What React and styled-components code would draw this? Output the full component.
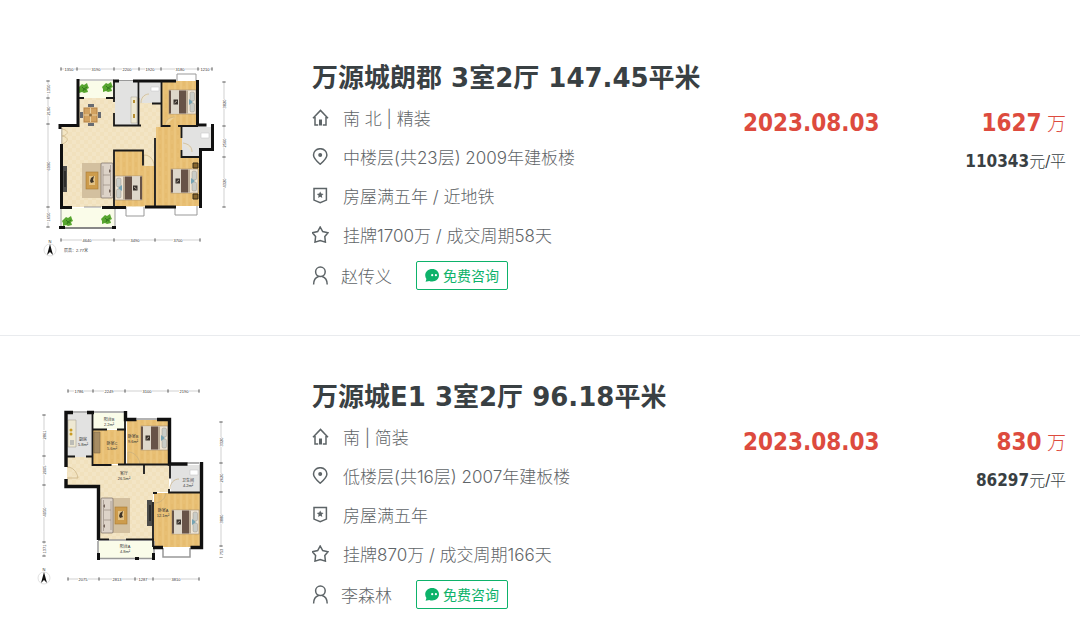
import React from 'react';
import styled, { createGlobalStyle } from 'styled-components';

const listings = [
  {
    id: 1,
    title: '万源城朗郡 3室2厅 147.45平米',
    house: '南 北 | 精装',
    position: '中楼层(共23层) 2009年建板楼',
    tags: '房屋满五年 / 近地铁',
    cycle: '挂牌1700万 / 成交周期58天',
    agent: '赵传义',
    date: '2023.08.03',
    total: '1627',
    unit: '110343',
    plan: PlanOne,
  },
  {
    id: 2,
    title: '万源城E1 3室2厅 96.18平米',
    house: '南 | 简装',
    position: '低楼层(共16层) 2007年建板楼',
    tags: '房屋满五年',
    cycle: '挂牌870万 / 成交周期166天',
    agent: '李森林',
    date: '2023.08.03',
    total: '830',
    unit: '86297',
    plan: PlanTwo,
  },
];

function App() {
  return (
    <>
      <GlobalStyle />
      <List>
        {listings.map((item) => (
          <Listing key={item.id} item={item} />
        ))}
      </List>
    </>
  );
}

export default App;

function Listing({ item }) {
  const Plan = item.plan;
  return (
    <Row>
      <PlanLink href="#" aria-label={item.title}>
        <Plan />
      </PlanLink>
      <Info>
        <Title><a href="#">{item.title}</a></Title>
        <Line><HouseIcon />{item.house}</Line>
        <Line><PinIcon />{item.position}</Line>
        <Line><BadgeIcon />{item.tags}</Line>
        <Line><StarIcon />{item.cycle}</Line>
        <AgentLine>
          <PersonIcon />
          <AgentName href="#">{item.agent}</AgentName>
          <ChatButton type="button"><ChatIcon />免费咨询</ChatButton>
        </AgentLine>
      </Info>
      <DealDate>{item.date}</DealDate>
      <Prices>
        <Total><b>{item.total}</b> 万</Total>
        <Unit><b>{item.unit}</b>元/平</Unit>
      </Prices>
    </Row>
  );
}

/* line icons */

function HouseIcon() {
  return (
    <Icon viewBox="0 0 17 17">
      <path d="M1 9.2 8.5 1.4 16 9.2M3 8v7.9h3.2M14 8v7.9h-3.2" />
      <path d="M8.5 10.5v6" strokeWidth="3" />
    </Icon>
  );
}

function PinIcon() {
  return (
    <Icon viewBox="0 0 17 17">
      <path d="M8.2 16.2C5 13.4 1.5 10.3 1.5 6.9a6.7 6.2 0 0 1 13.4 0c0 3.4-3.5 6.5-6.7 9.3z" />
      <circle cx="8.2" cy="7" r="2" fill="#5d6467" stroke="none" />
    </Icon>
  );
}

function BadgeIcon() {
  return (
    <Icon viewBox="0 0 17 17">
      <path d="M2 1.5h12.4v11.6l-6.2 2.6L2 13.1z" />
      <path d="m8.2 4.4 1 2.2 2.4.3-1.8 1.6.5 2.4-2.1-1.2-2.1 1.2.5-2.4-1.8-1.6 2.4-.3z" fill="#5d6467" stroke="none" />
    </Icon>
  );
}

function StarIcon() {
  return (
    <Icon viewBox="0 0 17 17">
      <path d="m8.2 1 2.5 4.6 5.3 1.2-3.2 3.8.6 5.5-5.2-1.6-5.2 1.6.6-5.5L.4 6.8l5.3-1.2z" />
    </Icon>
  );
}

function PersonIcon() {
  return (
    <Icon viewBox="0 0 17 19" $tall>
      <circle cx="8.4" cy="5.8" r="4.8" />
      <path d="M1.6 18.6c0-4.5 2.3-7.3 5-8.1M15.2 18.6c0-4.5-2.3-7.3-5-8.1" />
    </Icon>
  );
}

function ChatIcon() {
  return (
    <Bubble viewBox="0 0 14 13">
      <path d="M7.2 0C11 0 14 2.7 14 6.3s-3 6.2-6.8 6.2c-1.1 0-2-.2-2.9-.6L.6 12.7l.8-2.8A6 6 0 0 1 .2 6.3C.2 2.7 3.4 0 7.2 0z" fill="#0db26a" />
      <circle cx="7.2" cy="6.2" r="1.1" fill="#fff" />
      <circle cx="10.9" cy="6.2" r="1.1" fill="#fff" />
    </Bubble>
  );
}

/* floor plan pieces */

function PlanPatterns({ id }) {
  return (
    <defs>
      <pattern id={`wood-${id}`} width="12" height="9" patternUnits="userSpaceOnUse">
        <rect width="12" height="9" fill="#e8bf74" />
        <path d="M1 0v9M7 0v9" stroke="#ebc57d" strokeWidth="2" />
        <path d="M4 0v5M10 4v5" stroke="#e4b96a" />
      </pattern>
      <pattern id={`tile-${id}`} width="8" height="8" patternUnits="userSpaceOnUse">
        <rect width="8" height="8" fill="#f3e5c5" />
        <path d="M0 0h4v4H0zM4 4h4v4H4z" fill="#f1e1bd" />
      </pattern>
    </defs>
  );
}

function Bed({ x, y, flip }) {
  return (
    <g transform={flip ? `translate(${x + 27} ${y}) scale(-1 1)` : `translate(${x} ${y})`}>
      <rect width="27" height="24" fill="#efe6d6" stroke="#a08d72" strokeWidth="0.6" />
      <path d="M0 .5h2v23H0zM10 .5h7v23h-7z" fill="#675348" />
      <path d="M2 .5h8v23H2z" fill="#ded7ca" />
      <path d="M17 .5h2v23h-2z" fill="#b9aa95" />
      <rect x="4.5" y="9.5" width="4.5" height="5" fill="#39322d" />
      <path d="m5.5 13 2.4-2" stroke="#d8d1c4" strokeWidth="0.8" />
      <rect x="21" y="2" width="4.5" height="9" rx="1.5" fill="#c9ccc7" stroke="#8f8778" strokeWidth="0.4" />
      <rect x="21" y="13" width="4.5" height="9" rx="1.5" fill="#c9ccc7" stroke="#8f8778" strokeWidth="0.4" />
      <path d="m20 9 4 3-4 3z" fill="#75a3b4" />
    </g>
  );
}

function Bush({ x, y }) {
  return (
    <g transform={`translate(${x} ${y})`}>
      <path d="m-4-2 2-2 2 1 3-2 1 3 1 2-2 1 1 3-4 1-2-1-3 1v-3l-1-2z" fill="#57a52f" />
      <path d="M-2-1 0 1l3-2M-1 3l1-2 2 1" fill="none" stroke="#327a1c" />
    </g>
  );
}

function Sofa({ x, y, flip }) {
  return (
    <g transform={flip ? `translate(${x + 12} ${y}) scale(-1 1)` : `translate(${x} ${y})`}>
      <rect width="12" height="35" rx="1" fill="#ddd3c8" stroke="#756a61" strokeWidth="0.7" />
      <path d="M2 3v29M2 12h7M2 22h7M9.5 2v31" fill="none" stroke="#8d8177" strokeWidth="0.6" />
      <path d="m8 6 2 2-2 2zM8 26l2 2-2 2z" fill="#736259" />
    </g>
  );
}

function CoffeeTable({ x, y }) {
  return (
    <g>
      <rect x={x - 4} y={y - 9} width="19" height="35" fill="#d3c09f" />
      <rect x={x} y={y} width="12" height="17" fill="#cd9c4c" stroke="#a97a32" strokeWidth="0.6" />
      <rect x={x + 3} y={y + 4} width="6" height="9" fill="#e3c387" />
      <path d={`M${x + 5} ${y + 6}l3-2-1 4 1 2-3 1-1-2z`} fill="#3e3428" />
    </g>
  );
}

function Screen({ x, y }) {
  return (
    <g>
      <rect x={x} y={y} width="5" height="26" fill="#4c4c4a" />
      <path d={`M${x + 3} ${y + 5}v16`} stroke="#222" strokeWidth="1.5" />
    </g>
  );
}

// a chain of measurements with arrow ticks, drawn along x or y
function Dimension({ at, ticks, labels, vertical }) {
  const first = ticks[0];
  const last = ticks[ticks.length - 1];
  return (
    <g>
      <path
        d={vertical ? `M${at} ${first}V${last}` : `M${first} ${at}H${last}`}
        stroke="#b3b3b3"
        strokeWidth="0.6"
      />
      {ticks.map((t) => (
        <path
          key={t}
          d={vertical ? `M${at - 2} ${t}h4M${at} ${t - 1}v2` : `M${t} ${at - 2}v4M${t - 1} ${at}h2`}
          stroke="#777"
          strokeWidth="0.8"
        />
      ))}
      {labels.map(([pos, text]) => {
        const x = vertical ? at : pos;
        const y = vertical ? pos : at;
        return (
          <g key={pos} transform={vertical ? `rotate(-90 ${x} ${y})` : undefined}>
            <rect x={x - 5} y={y - 2} width="10" height="4" fill="#fff" />
            <PlanText x={x} y={y + 1.5}>{text}</PlanText>
          </g>
        );
      })}
    </g>
  );
}

function Compass({ x, y }) {
  return (
    <g>
      <circle cx={x} cy={y} r="6" fill="none" stroke="#ccc" strokeWidth="0.6" />
      <path d={`M${x} ${y - 6}l3 11-3-3-3 3z`} fill="#111" />
      <PlanText x={x} y={y - 7}>N</PlanText>
    </g>
  );
}

function RoomLabel({ x, y, name, area }) {
  return (
    <>
      <PlanText x={x} y={y}>{name}</PlanText>
      <PlanText x={x} y={y + 5}>{area}</PlanText>
    </>
  );
}

function PlanOne() {
  return (
    <PlanSvg viewBox="30 55 210 212">
      <PlanPatterns id="one" />
      <path d="M79 98h75v109H61v-83h18z" fill="url(#tile-one)" />
      <path d="M139 103h22v35h-22z" fill="url(#tile-one)" />
      <path d="M78 81h36v17H78zM61 208h54v19H61z" fill="#fafce9" />
      <path d="M115 81h24v44h-24zM140 81h21v22h-21zM182 127h29v22h-11v8h-18z" fill="#e2e2e1" />
      <path d="M162 81h35v46h-35zM156 127h26v30h17v49h-43zM115 151h28v15h12v40h-40z" fill="url(#wood-one)" />

      <Bed x={169} y={90} />
      <Bed x={171} y={169} />
      <Bed x={115} y={176} flip />
      <path d="M193 163h5v5h-5zM193 194h5v5h-5z" fill="#87662d" stroke="#372b16" />
      <CoffeeTable x={86} y={172} />
      <Sofa x={101} y={163} />
      <Screen x={62} y={166} />

      <path d="M88 104h6v3h-6zM88 123h6v3h-6zM80 112h3v6h-3zM98 112h3v6h-3z" fill="#676b72" />
      <rect x="84" y="108" width="13" height="14" fill="#d2a260" stroke="#b58244" />
      <path d="M84 115h13M90.500 108v14" stroke="#ead0a0" />
      <circle cx="90.500" cy="115" r="1.5" fill="#8b6a3c" />

      <path d="M131 97h6v26h-6z" fill="#eee8d2" stroke="#b4ad9b" strokeWidth="0.6" />
      <path d="M133 100h2v3h-2zM133 114h2v4h-2z" fill="#b88f32" />
      <path d="M151 87h8v4h-8zM201 133h8v5h-8z" fill="#fff" stroke="#c9c9c9" strokeWidth="0.6" />
      <Bush x={84} y={88} />
      <Bush x={108} y={87} />
      <Bush x={68} y={221} />
      <Bush x={107} y={219} />

      <path d="M62 128v16M177 81v-7h19v7M119 80.500h14M126 207v9h18v-9M175 206v9h22v-9M78 80h36M61 208v19M115 208v19M84 207h17" fill="none" stroke="#999" />
      <path d="M62 129c7 1 7 6 0 7 7 1 7 6 0 8M141 103c0-7 5-9 8-9M165 126c0-6 5-9 10-9M183 143c6 1 9 4 9 9M144 166v-11c6 0 10 5 10 11" fill="#f6e8c4" fillOpacity="0.4" stroke="#c6ad7c" strokeWidth="0.6" />

      <path d="M78 79v46.500H60V129M61.500 144v64" fill="none" stroke="#101010" strokeWidth="3" />
      <path d="M113 81h6M133 81h43M197.500 80v45h9M212.500 124v25.500h-12V208M145 207h11M156 207h20M60 207.500h12M102 207.500h24" fill="none" stroke="#101010" strokeWidth="3" />
      <path d="M114 80v22M114 113v12.500h27M138.500 80v45.500M152 103.500h9M161.500 81v45h9M155 138v68M114 208v-57.500h29v15M181.500 126v12M181.500 150v7h18M178 126h20M79 98h5M106 98h9" fill="none" stroke="#181818" strokeWidth="1.8" />
      <path d="M59 226h6v3h-6zM112 226h4v3h-4zM65 227.500h47v1H65z" fill="#101010" />

      <Dimension at={69} ticks={[61, 77, 114, 139, 161, 198, 212]} labels={[[69, '1350'], [96, '3190'], [127, '2200'], [150, '1920'], [180, '3180'], [205, '1210']]} />
      <Dimension at={240} ticks={[61, 114, 155, 200]} labels={[[87, '4640'], [135, '3490'], [178, '3700']]} />
      <Dimension vertical at={48} ticks={[81, 98, 124, 207, 227]} labels={[[89, '1350'], [111, '2190'], [166, '6990'], [217, '1650']]} />
      <Dimension vertical at={224} ticks={[82, 126, 157, 207]} labels={[[104, '3820'], [143, '2560'], [183, '4320']]} />
      <Compass x={50} y={250} />
      <PlanText x={76} y={252}>层高：2.77米</PlanText>
    </PlanSvg>
  );
}

function PlanTwo() {
  return (
    <PlanSvg viewBox="30 374 210 212">
      <PlanPatterns id="two" />
      <path d="M67 457h26v8h76v27h-16v48h-54v-54H67z" fill="url(#tile-two)" />
      <path d="M67 413h26v44H67zM171 465h30v28h-30z" fill="#e2e2e1" />
      <path d="M93 413h32v16H93zM99 541h54v17H99z" fill="#fafce9" />
      <path d="M93 430h32v34H93zM127 420h42v44h-42zM154 493h46v54h-46z" fill="url(#wood-two)" />

      <Bed x={141} y={426} />
      <Bed x={172} y={510} />
      <CoffeeTable x={115} y={507} />
      <Sofa x={101} y={498} flip />
      <Screen x={147} y={500} />
      <path d="M94 432h6v21h-6z" fill="#a68c63" stroke="#806a48" strokeWidth="0.6" />
      <path d="M68 420h8v27h-8z" fill="#eee8d2" stroke="#a9a394" strokeWidth="0.6" />
      <circle cx="71" cy="430" r="1.500" fill="#c99c25" />
      <circle cx="71" cy="434" r="1.500" fill="#c99c25" />
      <path d="M70 440h4v5h-4z" fill="#bcbcb6" />
      <path d="M190 470h8v5h-8z" fill="#fff" stroke="#c6c6c6" strokeWidth="0.6" />

      <path d="M73 412h14M94 412h30M137 419h20M187 463h12M98 541v14M154 541v14M163 548v9h27v-9M109 540h17M99 558.500h55" fill="none" stroke="#999" strokeWidth="1.5" />
      <path d="M67 467c6 0 10 5 11 11H67M128 464v-12c6 0 11 5 12 12M154 503c7 0 11-4 12-10M170 489c0-6 4-10 9-10" fill="none" stroke="#c6ad7c" strokeWidth="0.7" />

      <path d="M73 412.500h-7V467M66 479v7.500h32.500V540M87 412.500h7M125.500 411v8.500h11M157 419.500h12.500v44.500h18M201.500 462v85.500h-11M163 547.500h-10" fill="none" stroke="#101010" strokeWidth="3.4" />
      <path d="M92.500 413v52h19M118 464.500h25M67 456.500h8M86 456.500h7M92 429.500h15M117 429.500h9M125 420v44M143 464.500h27v14M144 464v10M169 489v3.500h32M153 502v45M153 493h4M98 539.500h11M126 539.500h28" fill="none" stroke="#181818" strokeWidth="1.8" />
      <path d="M97 553h3v7h-3zM152 553h3v7h-3zM135 557h4v3h-4z" fill="#101010" />

      <RoomLabel x={83} y={441} name="厨房" area="5.8m²" />
      <RoomLabel x={109} y={421} name="阳台B" area="2.2m²" />
      <RoomLabel x={112} y={445} name="卧室C" area="5.6m²" />
      <RoomLabel x={133} y={438} name="卧室B" area="9.6m²" />
      <RoomLabel x={124} y={475} name="客厅" area="26.5m²" />
      <RoomLabel x={188} y={482} name="卫生间" area="4.2m²" />
      <RoomLabel x={163} y={512} name="卧室A" area="12.1m²" />
      <RoomLabel x={125} y={548} name="阳台A" area="4.8m²" />

      <Dimension at={391} ticks={[68, 93, 125, 168, 199]} labels={[[79, '1786'], [109, '2249'], [147, '3100'], [184, '2190']]} />
      <Dimension at={579} ticks={[68, 99, 135, 153, 199]} labels={[[83, '2075'], [117, '2813'], [143, '1287'], [176, '3810']]} />
      <Dimension vertical at={44} ticks={[415, 456, 485, 542, 556]} labels={[[435, '2861'], [470, '2005'], [512, '4050'], [549, '1371']]} />
      <Dimension vertical at={221} ticks={[422, 463, 492, 546, 557]} labels={[[442, '3320'], [478, '2620'], [519, '3880'], [552, '753']]} />
      <Compass x={44} y={578} />
    </PlanSvg>
  );
}

const GlobalStyle = createGlobalStyle`
  *{
    box-sizing:border-box;
  }
  body{
    margin:0;
    background:#fff;
    color:#5f6568;
    font-family:Inter, "Noto Sans CJK SC", sans-serif;
    font-size:17px;
    font-weight:300;
  }
  a{
    color:inherit;
    text-decoration:none;
  }
`;

const List = styled.ul`
  list-style:none;
  margin:0;
  padding:17px 0 0;
`;

const Row = styled.li`
  display:grid;
  grid-template-columns:282px 1fr 160px 163px;
  align-items:start;
  padding:38px 14px 39px 30px;
  border-bottom:1px solid #e9ebee;
  &:last-child{
    padding-bottom:0;
    border-bottom:0;
  }
`;

const PlanLink = styled.a`
  display:block;
`;

const PlanSvg = styled.svg`
  display:block;
  width:210px;
  height:212px;
`;

const PlanText = styled.text`
  font-family:"Liberation Sans", "Noto Sans CJK SC", sans-serif;
  font-size:4px;
  font-weight:400;
  text-anchor:middle;
  fill:#333;
`;

const Info = styled.div`
  padding-top:5px;
`;

const Title = styled.h2`
  margin:0 0 2px;
  color:#394043;
  font-family:"DejaVu Sans", "Noto Sans CJK SC", sans-serif;
  font-size:26px;
  font-weight:600;
  line-height:36px;
  white-space:nowrap;
`;

const Line = styled.div`
  display:flex;
  align-items:center;
  gap:14px;
  height:39px;
  white-space:nowrap;
`;

const AgentLine = styled(Line)`
  gap:12px;
  height:42px;
`;

const AgentName = styled.a`
  margin-right:12px;
`;

const Icon = styled.svg`
  flex:none;
  width:17px;
  height:${(props) => (props.$tall ? '19px' : '17px')};
  fill:none;
  stroke:#5d6467;
  stroke-width:1.5;
`;

const ChatButton = styled.button`
  display:flex;
  align-items:center;
  gap:4px;
  height:29px;
  padding:0 8px;
  border:1px solid #0db26a;
  border-radius:2px;
  background:#fff;
  color:#0db26a;
  font-family:inherit;
  font-size:14px;
  font-weight:400;
  cursor:pointer;
`;

const Bubble = styled.svg`
  width:14px;
  height:13px;
`;

const DealDate = styled.div`
  margin-top:50px;
  color:#dd4b3e;
  font-family:"DejaVu Sans Condensed", "Noto Sans", sans-serif;
  font-size:24px;
  font-weight:700;
  line-height:36px;
`;

const Prices = styled.div`
  margin-top:50px;
  font-family:"DejaVu Sans Condensed", "Noto Sans CJK SC", sans-serif;
  text-align:right;
  white-space:nowrap;
`;

const Total = styled.div`
  color:#dd4b3e;
  font-size:19px;
  line-height:36px;
  b{
    font-size:24px;
    font-weight:700;
  }
`;

const Unit = styled.div`
  color:#394043;
  font-size:16px;
  line-height:38px;
  b{
    font-size:17px;
    font-weight:700;
  }
`;
